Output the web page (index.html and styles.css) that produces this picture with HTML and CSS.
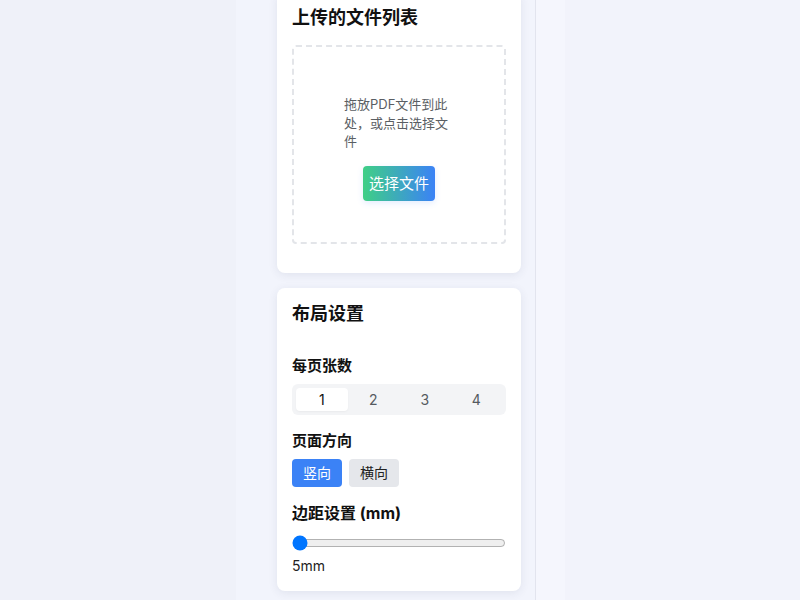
FILE: index.html
```html
<!DOCTYPE html>
<html lang="zh-CN">
<head>
<meta charset="utf-8">
<title>PDF 拼版</title>
<link rel="stylesheet" href="styles.css">
</head>
<body>
<div class="page">
  <div class="gutter-left"></div>
  <aside class="sidebar">
    <section class="card card-first">
      <h2 class="card-title">上传的文件列表</h2>
      <div class="dropzone">
        <p class="drop-text">拖放PDF文件到此处，或点击选择文件</p>
        <button class="btn-gradient" type="button">选择文件</button>
      </div>
    </section>
    <section class="card">
      <h2 class="card-title">布局设置</h2>
      <div class="group">
        <h3 class="label">每页张数</h3>
        <div class="segmented">
          <span class="seg-item active">1</span>
          <span class="seg-item">2</span>
          <span class="seg-item">3</span>
          <span class="seg-item">4</span>
        </div>
      </div>
      <div class="group">
        <h3 class="label">页面方向</h3>
        <div class="orient">
          <button class="btn-orient active" type="button">竖向</button>
          <button class="btn-orient" type="button">横向</button>
        </div>
      </div>
      <div class="group">
        <h3 class="label label-lg">边距设置 (mm)</h3>
        <input class="range" type="range" min="5" max="30" value="5">
        <div class="range-value">5mm</div>
      </div>
    </section>
  </aside>
  <div class="strip"></div>
  <main class="main"></main>
</div>
</body>
</html>
```
FILE: styles.css
```css
* { box-sizing: border-box; }
html, body { margin: 0; padding: 0; height: 100%; }
body {
  font-family: Inter, "Noto Sans CJK SC", sans-serif;
  color: #1f2328;
  background: #eff1f9;
  overflow: hidden;
}
.page {
  display: flex;
  min-height: 600px;
}
.gutter-left {
  width: 236px;
  flex: none;
  background: #eff1f9;
}
.sidebar {
  width: 300px;
  flex: none;
  background: #f2f4fc;
  border-right: 1px solid #e2e4ee;
  padding: 0 14px 0 41px;
  display: flex;
  flex-direction: column;
  gap: 15px;
}
.strip {
  width: 29px;
  flex: none;
  background: #f5f6fd;
}
.main {
  flex: 1;
  background: #f2f3fb;
}
.card {
  background: #ffffff;
  border-radius: 8px;
  box-shadow: 0 2px 10px rgba(40, 50, 90, 0.09);
  padding: 15px;
}
.card-first {
  margin-top: -8px;
}
.card-title {
  margin: 0 0 16px;
  font-size: 18px;
  line-height: 22px;
  font-weight: 700;
  color: #111;
}
.dropzone {
  border: 2px dashed #e3e5e9;
  border-radius: 4px;
  padding: 48px 0 41px;
  margin-bottom: 14px;
  display: flex;
  flex-direction: column;
  align-items: center;
}
.drop-text {
  margin: 0;
  width: 110px;
  font-size: 13px;
  line-height: 18.5px;
  color: #5a5e63;
}
.btn-gradient {
  margin-top: 15px;
  border: none;
  border-radius: 4px;
  padding: 8px 6px;
  font-family: inherit;
  font-size: 15px;
  line-height: 19px;
  color: #fff;
  background: linear-gradient(90deg, #3fcf86 0%, #3b82f6 100%);
  box-shadow: 0 2px 6px rgba(59, 130, 246, 0.15);
}
.group {
  margin-top: 15px;
}
.card-title + .group {
  margin-top: 30px;
}
.label {
  margin: 0 0 8px;
  font-size: 15px;
  line-height: 21px;
  font-weight: 700;
  color: #111;
}
.label-lg {
  font-size: 16px;
  line-height: 22px;
  margin-bottom: 8px;
}
.segmented {
  display: flex;
  background: #f3f4f6;
  border-radius: 6px;
  padding: 4px;
}
.seg-item {
  flex: 1;
  text-align: center;
  font-size: 14px;
  line-height: 23px;
  color: #555a60;
  border-radius: 4px;
}
.seg-item.active {
  background: #fff;
  color: #111;
  box-shadow: 0 1px 2px rgba(0, 0, 0, 0.04);
}
.orient {
  display: flex;
  gap: 7px;
  margin-top: 8px;
}
.btn-orient {
  border: none;
  border-radius: 4px;
  padding: 5px 11px;
  font-family: inherit;
  font-size: 14px;
  line-height: 18px;
  background: #e5e7eb;
  color: #222;
}
.btn-orient.active {
  background: #3b82f6;
  color: #fff;
}
.range {
  display: block;
  width: 100%;
  margin: 11px 0 0;
}
.range-value {
  margin-top: 5px;
  font-size: 14px;
  line-height: 20px;
  color: #222;
}
```
